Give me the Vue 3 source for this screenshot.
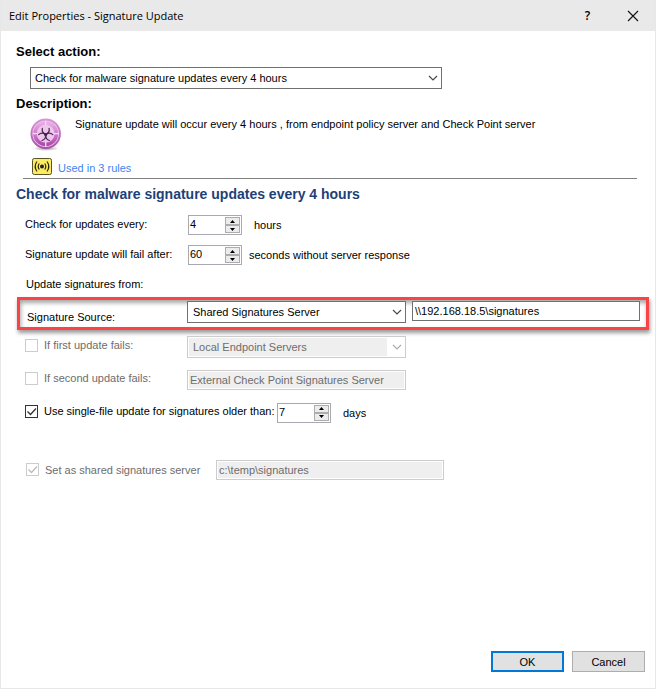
<script setup>
import { ref } from 'vue'

const action = ref('Check for malware signature updates every 4 hours')
const interval = ref(4)
const timeout = ref(60)
const source = ref('Shared Signatures Server')
const sourcePath = ref('\\\\192.168.18.5\\signatures')
const firstFallback = ref('Local Endpoint Servers')
const secondFallback = ref('External Check Point Signatures Server')
const useFirst = ref(false)
const useSecond = ref(false)
const singleFile = ref(true)
const maxAge = ref(7)
const shared = ref(true)
const sharedPath = ref('c:\\temp\\signatures')
</script>

<template>
  <div class="dialog">
    <header class="titlebar">
      <h1 class="title">Edit Properties - Signature Update</h1>
      <button class="title-btn" type="button">?</button>
      <button class="title-btn" type="button" aria-label="Close">
        <svg width="12" height="12" viewBox="0 0 12 12" fill="none" stroke="#111" stroke-width="1.1"><path d="M1 1l10 10M11 1L1 11" /></svg>
      </button>
    </header>

    <form class="body" @submit.prevent>
      <label class="heading" for="action">Select action:</label>
      <div class="combo combo-action">
        <select id="action" v-model="action">
          <option>Check for malware signature updates every 4 hours</option>
        </select>
        <svg class="chevron" viewBox="0 0 10 6"><path d="M1 1l4 4 4-4" /></svg>
      </div>

      <h2 class="heading">Description:</h2>
      <div class="desc">
        <svg class="badge" viewBox="0 0 32 34">
          <defs>
            <linearGradient id="rim" x1="0" y1="0" x2="0" y2="1">
              <stop offset="0" stop-color="#dc94da" />
              <stop offset="1" stop-color="#a850a9" />
            </linearGradient>
            <linearGradient id="ring" x1="0" y1="0" x2="0" y2="1">
              <stop offset="0" stop-color="#e6ade4" />
              <stop offset=".5" stop-color="#cf7ecd" />
              <stop offset="1" stop-color="#b14bb0" />
            </linearGradient>
            <radialGradient id="shade">
              <stop offset="0" stop-color="#555" stop-opacity=".6" />
              <stop offset="1" stop-color="#555" stop-opacity="0" />
            </radialGradient>
          </defs>
          <ellipse cx="16" cy="30.500" rx="13" ry="2.500" fill="url(#shade)" />
          <circle cx="15.700" cy="15.700" r="15.200" fill="url(#rim)" />
          <circle cx="15.700" cy="15.700" r="13.300" fill="#edc9ec" />
          <circle cx="15.700" cy="15.700" r="10.700" fill="none" stroke="url(#ring)" stroke-width="3.600" />
          <path d="M15.700 3v5M15.700 24v5M3 15.700h5M24 15.700h5" stroke="#f7ddf6" stroke-width="1.300" />
          <circle cx="15.700" cy="15.700" r="8.600" fill="#efc5ee" />
          <g fill="none" stroke="#43274a" stroke-width="1.200" stroke-linecap="round">
            <path id="horns" d="M12.300 10.300c-.6 3 .8 5.300 3.400 5.700c2.600-.4 4-2.700 3.400-5.700" />
            <use href="#horns" transform="rotate(120 15.700 16.500)" />
            <use href="#horns" transform="rotate(240 15.700 16.500)" />
          </g>
          <circle cx="15.700" cy="16.500" r="1.500" fill="#43274a" />
        </svg>
        <p class="desc-text">Signature update will occur every 4 hours , from endpoint policy server and Check Point server</p>
      </div>
      <div class="usage">
        <svg class="signal" viewBox="0 0 20 17">
          <rect x=".5" y=".5" width="19" height="16" rx="1.800" fill="#fcec64" stroke="#5a5424" />
          <circle cx="10" cy="8.500" r="2" fill="#222" />
          <path d="M7.300 5.500q-2.200 3 0 6M12.700 5.500q2.200 3 0 6M5 3.500q-3.600 5 0 10M15 3.500q3.600 5 0 10" fill="none" stroke="#28250c" stroke-width="1.200" />
        </svg>
        <a href="#">Used in 3 rules</a>
      </div>

      <h2 class="heading section">Check for malware signature updates every 4 hours</h2>

      <div class="row">
        <label class="name" for="interval">Check for updates every:</label>
        <div class="spin">
          <input id="interval" v-model="interval" type="number">
          <div class="steps">
            <button type="button" aria-label="More hours" @click="interval++"><svg viewBox="0 0 5 3"><path d="M0 3L2.500 0 5 3z" /></svg></button>
            <button type="button" aria-label="Fewer hours" @click="interval--"><svg viewBox="0 0 5 3"><path d="M0 0L2.500 3 5 0z" /></svg></button>
          </div>
        </div>
        <span class="unit">hours</span>
      </div>
      <div class="row">
        <label class="name" for="timeout">Signature update will fail after:</label>
        <div class="spin">
          <input id="timeout" v-model="timeout" type="number">
          <div class="steps">
            <button type="button" aria-label="More seconds" @click="timeout++"><svg viewBox="0 0 5 3"><path d="M0 3L2.500 0 5 3z" /></svg></button>
            <button type="button" aria-label="Fewer seconds" @click="timeout--"><svg viewBox="0 0 5 3"><path d="M0 0L2.500 3 5 0z" /></svg></button>
          </div>
        </div>
        <span class="unit near">seconds without server response</span>
      </div>
      <p class="from">Update signatures from:</p>

      <div class="marked">
        <label class="name" for="source">Signature Source:</label>
        <div class="combo combo-source">
          <select id="source" v-model="source">
            <option>Shared Signatures Server</option>
            <option>Local Endpoint Servers</option>
            <option>External Check Point Signatures Server</option>
          </select>
          <svg class="chevron" viewBox="0 0 10 6"><path d="M1 1l4 4 4-4" /></svg>
        </div>
        <input v-model="sourcePath" class="text path" type="text" aria-label="Signature path">
      </div>

      <div class="row tall">
        <label class="check name off">
          <span class="tick"><input v-model="useFirst" type="checkbox" disabled></span>
          If first update fails:
        </label>
        <div class="combo combo-source off">
          <select v-model="firstFallback" disabled aria-label="First fallback">
            <option>Local Endpoint Servers</option>
          </select>
          <svg class="chevron" viewBox="0 0 10 6"><path d="M1 1l4 4 4-4" /></svg>
        </div>
      </div>
      <div class="row tall">
        <label class="check name off">
          <span class="tick"><input v-model="useSecond" type="checkbox" disabled></span>
          If second update fails:
        </label>
        <input v-model="secondFallback" class="text fallback" type="text" disabled aria-label="Second fallback">
      </div>
      <div class="row tall">
        <label class="check age">
          <span class="tick">
            <input v-model="singleFile" type="checkbox">
            <svg v-if="singleFile" viewBox="0 0 13 13"><path d="M2.500 6.500l3 3 5.500-6" /></svg>
          </span>
          Use single-file update for signatures older than:
        </label>
        <div class="spin">
          <input v-model="maxAge" type="number" aria-label="Days">
          <div class="steps">
            <button type="button" aria-label="More days" @click="maxAge++"><svg viewBox="0 0 5 3"><path d="M0 3L2.500 0 5 3z" /></svg></button>
            <button type="button" aria-label="Fewer days" @click="maxAge--"><svg viewBox="0 0 5 3"><path d="M0 0L2.500 3 5 0z" /></svg></button>
          </div>
        </div>
        <span class="unit">days</span>
      </div>
      <div class="row tall shared">
        <label class="check share off">
          <span class="tick">
            <input v-model="shared" type="checkbox" disabled>
            <svg v-if="shared" viewBox="0 0 13 13"><path d="M2.500 6.500l3 3 5.500-6" /></svg>
          </span>
          Set as shared signatures server
        </label>
        <input v-model="sharedPath" class="text share-path" type="text" disabled aria-label="Shared path">
      </div>

      <footer class="actions">
        <button class="btn primary" type="submit">OK</button>
        <button class="btn" type="button">Cancel</button>
      </footer>
    </form>
  </div>
</template>

<style>
body { margin: 0; background: #fff; }
</style>

<style scoped>
* { box-sizing: border-box; }
.dialog {
  min-height: 100vh; display: flex; flex-direction: column; background: #fff; color: #000;
  border: 1px solid #e7e7e7; border-top: 0; font: 11px/14px "Liberation Sans", Arial, sans-serif;
}
h1, h2, p { margin: 0; }
input, select, button { font: inherit; color: inherit; margin: 0; border-radius: 0; outline: none; }

.titlebar { height: 31px; display: flex; align-items: center; background: #e9e9e9; padding-left: 8px; }
.title { flex: 1; font: 400 11px/16px "Open Sans", "Noto Sans", sans-serif; }
.title-btn {
  width: 45px; height: 31px; display: grid; place-items: center; padding: 0; border: 0; background: none;
  font: 600 12px/16px "Open Sans", "Noto Sans", sans-serif;
}

.body { flex: 1; display: flex; flex-direction: column; padding: 12px 10px 16px 15px; }
.heading { font-size: 13px; line-height: 18px; font-weight: 700; }
.section { font-size: 14px; margin-top: 6px; margin-bottom: 7px; color: #1f3f77; }

.combo { position: relative; height: 22px; }
.combo select {
  appearance: none; width: 100%; height: 100%; padding: 0 20px 0 4px; border: 1px solid #707070; background: #fff;
}
.combo .chevron {
  position: absolute; right: 4px; top: 8px; width: 10px; height: 6px; fill: none; stroke: #444; stroke-width: 1.1;
  pointer-events: none;
}
.combo-action { width: 412px; margin: 6px 0 6px 14px; }
.combo-source { width: 219px; flex: none; }
.combo-source select { padding-left: 5px; }
.combo.off select {
  color: #6d6d6d; opacity: 1; border-color: #ccc;
  background: linear-gradient(#efefef, #efefef) 1px 1px / calc(100% - 19px) calc(100% - 2px) no-repeat #fff;
}
.combo.off .chevron { stroke: #aaa; }

.desc { display: flex; align-items: flex-start; gap: 12px; padding: 4px 0 0 14px; }
.badge { width: 32px; height: 34px; margin-top: 1px; flex: none; }
.desc-text { padding-left: 1px; }
.usage {
  display: flex; align-items: flex-end; gap: 6px; height: 27px; margin: 0 8px 0 7px; padding: 0 0 3px 9px;
  border-bottom: 1px solid #808080;
}
.signal { width: 20px; height: 17px; }
.usage a { color: #3d83f0; text-decoration: none; }

.row { display: flex; align-items: center; height: 30px; padding-left: 9px; white-space: nowrap; }
.row.tall { height: 33px; }
.name { width: 162px; flex: none; padding-bottom: 3px; }
.from { height: 27px; padding: 7px 0 0 10px; }
.unit { padding-left: 12px; }
.unit.near { padding-left: 7px; }

.spin { display: flex; width: 54px; height: 20px; margin-left: 1px; border: 1px solid #a9a9b0; background: #fff; }
.spin input {
  flex: 1; min-width: 0; padding: 0 0 2px 1px; border: 0; background: none; appearance: textfield;
}
.spin input::-webkit-inner-spin-button { appearance: none; margin: 0; }
.steps { width: 15px; display: flex; flex-direction: column; margin: 1px; }
.steps button {
  flex: 1; min-height: 0; display: grid; place-items: center; padding: 0; border: 1px solid #adadad; background: #ececec;
}
.steps svg { width: 5px; height: 3px; display: block; }

.marked {
  display: flex; align-items: flex-start; height: 33px; margin: 0 -4px 0 1px; padding: 1px 6px 0 7px;
  border: 3px solid #fb4244;
  box-shadow: 1px 3px 4px rgba(0,0,0,.4), inset 1px 3px 4px rgba(0,0,0,.35);
}
.marked .name { width: 160px; align-self: flex-end; }
.text { height: 20px; padding: 0 2px; border: 1px solid #707070; background: #fff; }
.text:disabled { color: #6d6d6d; border-color: #ccc; background: #efefef; box-shadow: inset 0 0 0 1px #fff; }
.path { flex: 1; min-width: 0; margin-left: 6px; }
.fallback { width: 219px; }
.share-path { width: 228px; }

.check { display: flex; align-items: center; gap: 6px; flex: none; padding-bottom: 3px; }
.check.off { color: #6d6d6d; }
.tick { position: relative; width: 13px; height: 13px; flex: none; }
.tick input { appearance: none; display: block; width: 13px; height: 13px; border: 1px solid #333; background: #fff; }
.tick svg { position: absolute; inset: 0; fill: none; stroke: #333; stroke-width: 1.3; pointer-events: none; }
.off .tick input { border-color: #ccc; }
.off .tick svg { stroke: #bbb; }
.age { width: 251px; }
.share { width: 190px; padding: 0; }
.shared { margin-top: 24px; padding-left: 10px; }

.actions { display: flex; justify-content: flex-end; gap: 8px; margin-top: auto; }
.btn { width: 73px; height: 21px; padding: 0; border: 1px solid #adadad; background: #e1e1e1; }
.btn.primary { border: 2px solid #0078d7; }
</style>
